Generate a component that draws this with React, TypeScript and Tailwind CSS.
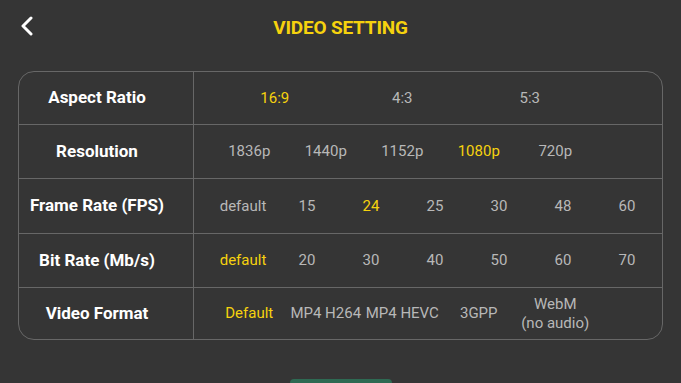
import React from 'react';

type Row = {
  label: string;
  options: string[];
  selected: number;
  slot: string;
  height: string;
};

const rows: Row[] = [
  { label: 'Aspect Ratio', options: ['16:9', '4:3', '5:3'], selected: 0, slot: 'w-[127.5px]', height: 'h-[52px]' },
  { label: 'Resolution', options: ['1836p', '1440p', '1152p', '1080p', '720p'], selected: 3, slot: 'w-[76.5px]', height: 'h-[54px]' },
  { label: 'Frame Rate (FPS)', options: ['default', '15', '24', '25', '30', '48', '60'], selected: 2, slot: 'w-[64px]', height: 'h-[55px]' },
  { label: 'Bit Rate (Mb/s)', options: ['default', '20', '30', '40', '50', '60', '70'], selected: 0, slot: 'w-[64px]', height: 'h-[54px]' },
  { label: 'Video Format', options: ['Default', 'MP4 H264', 'MP4 HEVC', '3GPP', 'WebM\n(no audio)'], selected: 0, slot: 'w-[76.5px]', height: 'h-[52px]' },
];

const BackIcon = () => (
  <svg width="14" height="20" viewBox="0 0 14 20" fill="none">
    <path d="M11 2 L3 10 L11 18" stroke="white" strokeWidth="3" strokeLinecap="round" strokeLinejoin="round" />
  </svg>
);

export default function App() {
  return (
    <div className="w-full h-[383px] bg-[#353535] overflow-hidden flex flex-col font-['Roboto',sans-serif]">
      <header className="relative h-[54px] flex items-center justify-center">
        <button className="absolute left-[20px] top-[16px] p-0">
          <BackIcon />
        </button>
        <h1 className="text-[19px] font-bold text-[#f6d20e] tracking-[-0.2px] mt-[2px]">VIDEO SETTING</h1>
      </header>

      <div className="mx-[18px] mt-[17px] border border-[#676767] rounded-[16px] overflow-hidden">
        {rows.map((row, i) => (
          <div
            key={row.label}
            className={`grid grid-cols-[175px_1fr] ${row.height} ${i > 0 ? 'border-t border-[#676767]' : ''}`}
          >
            <div className="flex items-center justify-center pr-[18px] border-r border-[#676767] text-white font-bold text-[17px]">
              {row.label}
            </div>
            <div className="flex items-center pl-[17px]">
              {row.options.map((opt, j) => (
                <span
                  key={opt}
                  className={`${row.slot} shrink-0 text-center whitespace-pre-line text-[15px] leading-[19px] ${
                    j === row.selected ? 'text-[#f6d20e]' : 'text-[#b8b8b8]'
                  }`}
                >
                  {opt}
                </span>
              ))}
            </div>
          </div>
        ))}
      </div>

      <div className="mt-auto flex justify-center">
        <div className="w-[102px] h-[4px] bg-[#2e6a53] rounded-t-[4px]" />
      </div>
    </div>
  );
}
